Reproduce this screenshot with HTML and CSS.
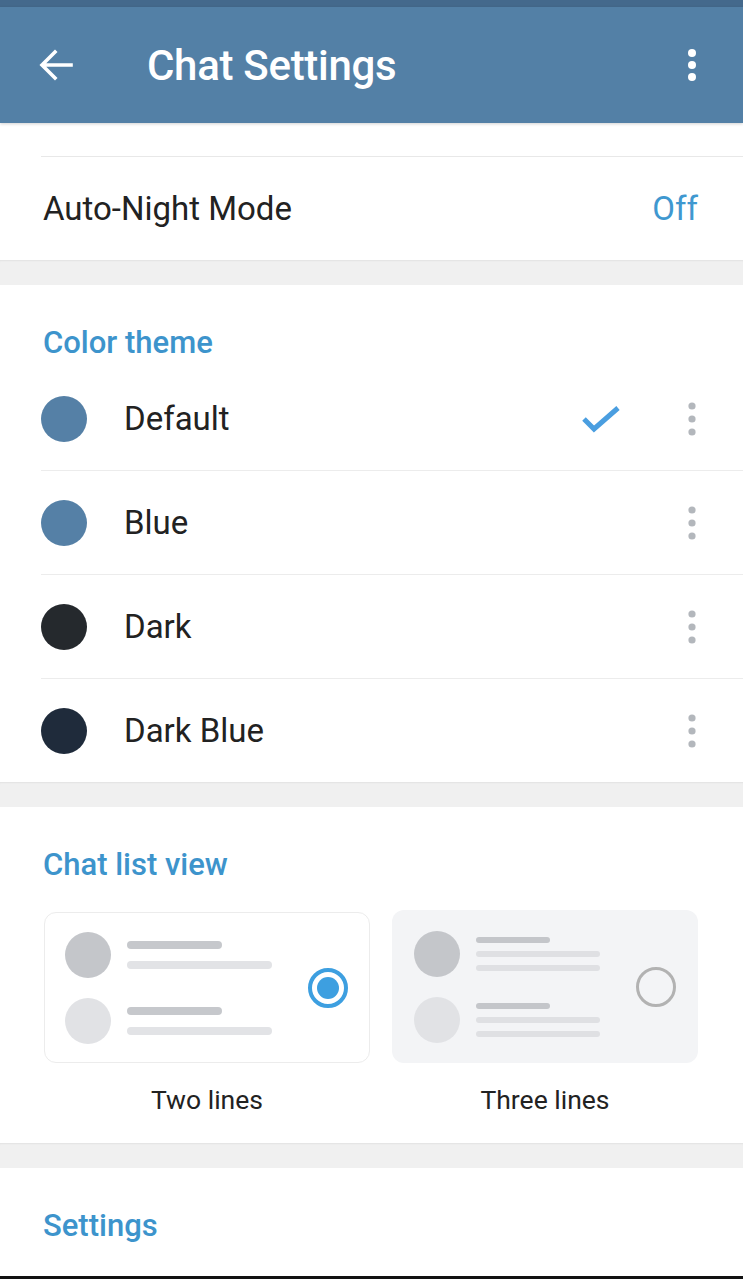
FILE: index.html
```html
<!DOCTYPE html>
<html lang="en">
<head>
    <meta charset="UTF-8">
    <meta name="viewport" content="width=device-width, initial-scale=1.0">
    <title>Chat Settings</title>
    <link rel="stylesheet" href="styles.css">
</head>
<body>
<div class="status-bar"></div>
<header class="app-bar">
    <svg class="back" width="36" height="36" viewBox="0 0 36 36">
        <path d="M33 18H5M17 5L4 18l13 13" fill="none" stroke="#fff" stroke-width="3.6" stroke-linecap="square"/>
    </svg>
    <h1>Chat Settings</h1>
    <svg class="menu" width="10" height="36" viewBox="0 0 10 36">
        <circle cx="5" cy="6" r="4" fill="#fff"/>
        <circle cx="5" cy="18" r="4" fill="#fff"/>
        <circle cx="5" cy="30" r="4" fill="#fff"/>
    </svg>
</header>

<section class="block">
    <div class="cut-row"></div>
    <div class="row">
        <span class="label">Auto-Night Mode</span>
        <span class="value">Off</span>
    </div>
</section>

<div class="gap"></div>

<section class="block">
    <h2>Color theme</h2>
    <div class="theme">
        <span class="swatch" style="background:#5580a6"></span>
        <span class="name">Default</span>
        <svg class="check" width="40" height="30" viewBox="0 0 40 30">
            <path d="M3 15l10 10L37 4" fill="none" stroke="#4a9ee0" stroke-width="5"/>
        </svg>
        <svg class="more" width="10" height="36" viewBox="0 0 10 36">
            <circle cx="5" cy="5" r="3.6" fill="#b3b7bc"/>
            <circle cx="5" cy="18" r="3.6" fill="#b3b7bc"/>
            <circle cx="5" cy="31" r="3.6" fill="#b3b7bc"/>
        </svg>
    </div>
    <div class="theme">
        <span class="swatch" style="background:#5580a6"></span>
        <span class="name">Blue</span>
        <svg class="more" width="10" height="36" viewBox="0 0 10 36">
            <circle cx="5" cy="5" r="3.6" fill="#b3b7bc"/>
            <circle cx="5" cy="18" r="3.6" fill="#b3b7bc"/>
            <circle cx="5" cy="31" r="3.6" fill="#b3b7bc"/>
        </svg>
    </div>
    <div class="theme">
        <span class="swatch" style="background:#25292d"></span>
        <span class="name">Dark</span>
        <svg class="more" width="10" height="36" viewBox="0 0 10 36">
            <circle cx="5" cy="5" r="3.6" fill="#b3b7bc"/>
            <circle cx="5" cy="18" r="3.6" fill="#b3b7bc"/>
            <circle cx="5" cy="31" r="3.6" fill="#b3b7bc"/>
        </svg>
    </div>
    <div class="theme">
        <span class="swatch" style="background:#1f2b3b"></span>
        <span class="name">Dark Blue</span>
        <svg class="more" width="10" height="36" viewBox="0 0 10 36">
            <circle cx="5" cy="5" r="3.6" fill="#b3b7bc"/>
            <circle cx="5" cy="18" r="3.6" fill="#b3b7bc"/>
            <circle cx="5" cy="31" r="3.6" fill="#b3b7bc"/>
        </svg>
    </div>
</section>

<div class="gap"></div>

<section class="block">
    <h2>Chat list view</h2>
    <div class="views">
        <div class="view">
            <div class="card card-two">
                <div class="preview">
                    <div class="item">
                        <span class="ava"></span>
                        <div class="lines">
                            <span class="line short dark"></span>
                            <span class="line"></span>
                        </div>
                    </div>
                    <div class="item">
                        <span class="ava light"></span>
                        <div class="lines">
                            <span class="line short dark"></span>
                            <span class="line"></span>
                        </div>
                    </div>
                </div>
                <span class="radio on"></span>
            </div>
            <div class="view-name">Two lines</div>
        </div>
        <div class="view">
            <div class="card card-three">
                <div class="preview">
                    <div class="item">
                        <span class="ava"></span>
                        <div class="lines thin">
                            <span class="line short dark"></span>
                            <span class="line"></span>
                            <span class="line"></span>
                        </div>
                    </div>
                    <div class="item">
                        <span class="ava light"></span>
                        <div class="lines thin">
                            <span class="line short dark"></span>
                            <span class="line"></span>
                            <span class="line"></span>
                        </div>
                    </div>
                </div>
                <span class="radio"></span>
            </div>
            <div class="view-name">Three lines</div>
        </div>
    </div>
</section>

<div class="gap"></div>

<section class="block last">
    <h2>Settings</h2>
</section>
<div class="nav-edge"></div>
</body>
</html>
```

FILE: styles.css
```css
body { margin: 0; background: #f0f0f0; font-family: Roboto, "Noto Sans", sans-serif; color: #222; height: 1279px; overflow: hidden; display: flex; flex-direction: column; }

.status-bar { height: 7px; background: #44698c; }
.app-bar {
    height: 116px; background: #5380a6; display: flex; align-items: center;
    padding: 0 0 0 38px; position: relative; z-index: 1;
    box-shadow: 0 1px 3px rgba(0,0,0,0.18);
}
.app-bar h1 { margin: 0 0 0 73px; flex: 1; color: #fff; font-size: 42px; font-weight: 500; letter-spacing: -0.3px; }
.app-bar .menu { margin-right: 46px; }

.block { background: #fff; }
.cut-row { height: 33px; margin-left: 41px; border-bottom: 1px solid #e8e8e8; }
.row { height: 103px; display: flex; align-items: center; justify-content: space-between; padding: 0 45px 0 43px; }
.row .label { font-size: 33px; }
.row .value { font-size: 33px; color: #3f98d0; }

.gap { height: 25px; background: #f0f0f0; box-shadow: inset 0 2px 2px -1px rgba(0,0,0,0.06); }

h2 { margin: 0; padding: 43px 43px 9px; height: 30px; line-height: 30px; font-size: 31px; font-weight: 500; color: #3d94cc; }

.theme { height: 104px; display: flex; align-items: center; margin-left: 41px; padding-right: 46px; border-bottom: 1px solid #ececec; box-sizing: border-box; }
.theme:last-child { border-bottom: none; height: 103px; }
.swatch { width: 46px; height: 46px; border-radius: 50%; }
.name { font-size: 33px; margin-left: 37px; flex: 1; }
.check { margin-right: 66px; }

.views { display: flex; gap: 22px; padding: 21px 45px 0 44px; }
.view { display: flex; flex-direction: column; align-items: center; }
.card { display: flex; align-items: center; box-sizing: border-box; border-radius: 12px; padding-left: 20px; }
.card-two { width: 326px; height: 151px; border: 1.5px solid #ececec; margin-top: 2px; }
.card-three { width: 306px; height: 153px; background: #f3f4f6; padding-left: 22px; }
.preview { display: flex; flex-direction: column; gap: 20px; flex: 1; }
.item { display: flex; align-items: center; gap: 16px; }
.ava { width: 46px; height: 46px; border-radius: 50%; background: #c4c6ca; }
.ava.light { background: #e1e2e5; }
.lines { display: flex; flex-direction: column; gap: 12px; }
.line { display: block; width: 145px; height: 8px; border-radius: 4px; background: #e2e3e6; }
.line.short { width: 95px; }
.line.dark { background: #c6c8cc; }
.lines.thin { gap: 8px; }
.lines.thin .line { height: 6px; width: 124px; background: #dfe0e3; }
.lines.thin .line.short { width: 74px; background: #c4c6ca; }
.radio { width: 40px; height: 40px; box-sizing: border-box; border-radius: 50%; border: 3px solid #b2b2b2; margin-right: 22px; position: relative; }
.card-two .radio { margin-right: 21px; }
.radio.on { border: 4px solid #3d9fe0; }
.radio.on::after { content: ""; position: absolute; left: 5px; top: 5px; width: 22px; height: 22px; border-radius: 50%; background: #3d9fe0; }
.view-name { font-size: 26.5px; margin-top: 22px; height: 30px; line-height: 30px; padding-bottom: 28px; }

.last { flex: 1; }
.nav-edge { height: 3px; background: #111; }
```
